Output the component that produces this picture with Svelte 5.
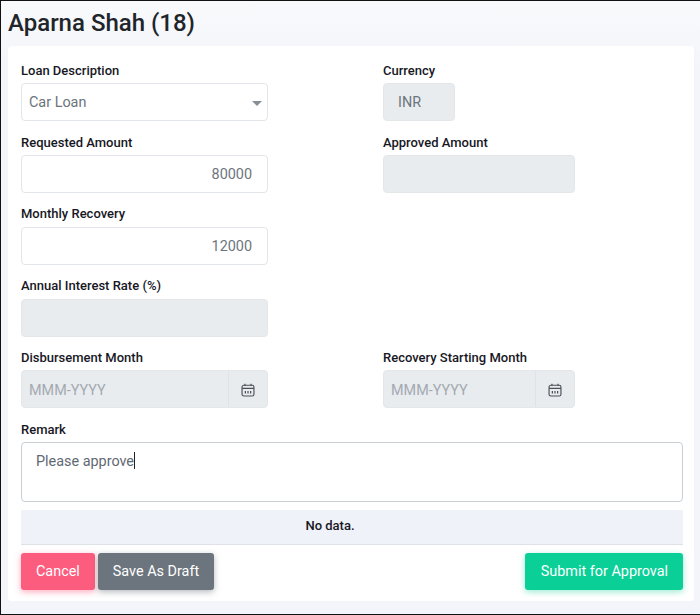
<script>
	const calendarBars = [5, 8, 11];
</script>

<div class="page">
	<h1>Aparna Shah (18)</h1>
	<div class="card">
		<div class="grid">
			<div class="field">
				<span class="label">Loan Description</span>
				<div class="input wide select">
					<span>Car Loan</span>
					<span class="caret"></span>
				</div>
			</div>
			<div class="field">
				<span class="label">Currency</span>
				<div class="input disabled currency"><span>INR</span></div>
			</div>

			<div class="field">
				<span class="label">Requested Amount</span>
				<div class="input wide number">80000</div>
			</div>
			<div class="field">
				<span class="label">Approved Amount</span>
				<div class="input disabled medium"></div>
			</div>

			<div class="field">
				<span class="label">Monthly Recovery</span>
				<div class="input wide number">12000</div>
			</div>
			<div class="field"></div>

			<div class="field">
				<span class="label">Annual Interest Rate (%)</span>
				<div class="input disabled wide"></div>
			</div>
			<div class="field"></div>

			<div class="field">
				<span class="label">Disbursement Month</span>
				<div class="input disabled wide date">
					<span class="placeholder">MMM-YYYY</span>
					<span class="addon">
						<svg width="14" height="14" viewBox="0 0 16 16" fill="none" stroke="#495057" stroke-width="1.3">
							<rect x="1.2" y="2.6" width="13.6" height="12.2" rx="2" />
							<path d="M1.2 6.2h13.6M4.5 .8v2.6M11.5 .8v2.6" />
							{#each calendarBars as x}
								<path d="M{x} 9v3" stroke-width="1.4" />
							{/each}
						</svg>
					</span>
				</div>
			</div>
			<div class="field">
				<span class="label">Recovery Starting Month</span>
				<div class="input disabled medium date">
					<span class="placeholder">MMM-YYYY</span>
					<span class="addon">
						<svg width="14" height="14" viewBox="0 0 16 16" fill="none" stroke="#495057" stroke-width="1.3">
							<rect x="1.2" y="2.6" width="13.6" height="12.2" rx="2" />
							<path d="M1.2 6.2h13.6M4.5 .8v2.6M11.5 .8v2.6" />
							{#each calendarBars as x}
								<path d="M{x} 9v3" stroke-width="1.4" />
							{/each}
						</svg>
					</span>
				</div>
			</div>
		</div>

		<div class="remark">
			<span class="label">Remark</span>
			<div class="textarea">Please approve<span class="cursor"></span></div>
		</div>

		<div class="nodata">No data.</div>

		<div class="actions">
			<button class="btn cancel">Cancel</button>
			<button class="btn draft">Save As Draft</button>
			<button class="btn submit">Submit for Approval</button>
		</div>
	</div>
</div>

<style>
	:global(body) {
		margin: 0;
		font-family: Roboto, "Liberation Sans", sans-serif;
	}

	.page {
		box-sizing: border-box;
		width: 700px;
		height: 615px;
		padding: 0 6px 0 7px;
		background: linear-gradient(#f9fafc, #f3f5fa 60px);
		border-top: 1px solid #111;
		border-left: 1px solid #111;
		border-bottom: 1px solid #111;
		display: flex;
		flex-direction: column;
	}

	h1 {
		margin: 0;
		height: 45px;
		line-height: 44px;
		font-size: 24px;
		font-weight: 500;
		color: #212529;
	}

	.card {
		box-sizing: border-box;
		height: 555px;
		padding: 12.25px 11px 0 13px;
		background: #fff;
		border-radius: 4px;
	}

	.grid {
		display: grid;
		grid-template-columns: 362px 1fr;
		grid-auto-rows: 71.75px;
	}

	.field {
		display: flex;
		flex-direction: column;
	}

	.label {
		height: 25px;
		line-height: 25px;
		font-size: 13px;
		font-weight: 500;
		color: #17171f;
		margin-top: -0.5px;
		margin-bottom: 0.5px;
	}

	.input {
		box-sizing: border-box;
		height: 38px;
		border: 1px solid #e2e5e9;
		border-radius: 4px;
		font-size: 14.4px;
		color: #6c757d;
		background: #fff;
		display: flex;
		align-items: center;
	}

	.wide {
		width: 247px;
	}

	.medium {
		width: 192px;
	}

	.disabled {
		background: #e9ecef;
		border-color: #e4e7ea;
	}

	.select {
		padding: 0 5px 0 7px;
		justify-content: space-between;
	}

	.caret {
		width: 0;
		height: 0;
		border-left: 5.5px solid transparent;
		border-right: 5.5px solid transparent;
		border-top: 5px solid #868e96;
		margin-top: 2px;
	}

	.number {
		justify-content: flex-end;
		padding: 0.5px 15px 0 0;
	}

	.currency {
		width: 72px;
		padding-left: 14px;
	}

	.date {
		justify-content: space-between;
		padding-left: 7px;
	}

	.placeholder {
		color: #a3aab1;
		padding-top: 2px;
	}

	.addon {
		width: 39px;
		height: 100%;
		padding-top: 1px;
		box-sizing: border-box;
		border-left: 1px solid #dfe2e6;
		display: flex;
		align-items: center;
		justify-content: center;
	}

	.remark {
		display: flex;
		flex-direction: column;
	}

	.textarea {
		box-sizing: border-box;
		height: 60px;
		padding: 9px 14px;
		border: 1px solid #c9ced4;
		border-radius: 4px;
		font-size: 14.4px;
		line-height: 18px;
		color: #5f6973;
	}

	.cursor {
		display: inline-block;
		width: 1px;
		height: 17px;
		background: #222;
		vertical-align: -3px;
	}

	.nodata {
		margin-top: 8px;
		height: 35px;
		line-height: 32px;
		box-sizing: border-box;
		padding-right: 44px;
		background: #eff2f9;
		border-bottom: 1px solid #dee2e6;
		text-align: center;
		font-size: 13px;
		font-weight: 500;
		color: #17171f;
	}

	.actions {
		margin-top: 8px;
		display: flex;
		gap: 3px;
	}

	.btn {
		height: 37px;
		padding: 0 15px;
		border: none;
		border-radius: 3px;
		font-family: inherit;
		font-size: 14.4px;
		color: #fff;
	}

	.cancel {
		background: #fc5c7d;
		box-shadow: 0 2px 6px rgba(252, 92, 125, 0.5);
	}

	.draft {
		background: #6c757d;
		box-shadow: 0 2px 6px rgba(108, 117, 125, 0.5);
	}

	.submit {
		margin-left: auto;
		padding: 0 15px 0 16px;
		background: #0ad097;
		box-shadow: 0 2px 6px rgba(10, 208, 151, 0.4);
	}
</style>
